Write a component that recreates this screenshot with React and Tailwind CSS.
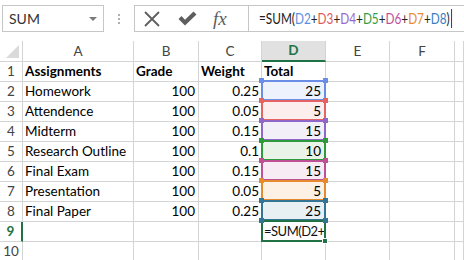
const ranges = {
  2: { border: 'border-[#6a8ee6]', handle: 'bg-[#6a8ee6]', fill: 'bg-[#edf2fc]' },
  3: { border: 'border-[#e46464]', handle: 'bg-[#e46464]', fill: 'bg-[#fdeeee]' },
  4: { border: 'border-[#9066c8]', handle: 'bg-[#9066c8]', fill: 'bg-[#f2eff9]' },
  5: { border: 'border-[#2f9a3c]', handle: 'bg-[#2f9a3c]', fill: 'bg-[#e9f3e8]' },
  6: { border: 'border-[#be5096]', handle: 'bg-[#be5096]', fill: 'bg-[#f8ecf4]' },
  7: { border: 'border-[#e68a2e]', handle: 'bg-[#e68a2e]', fill: 'bg-[#fdf1e6]' },
  8: { border: 'border-[#347596]', handle: 'bg-[#347596]', fill: 'bg-[#e8f0f4]' },
};

const rows = [
  { n: 1, a: 'Assignments', b: 'Grade', c: 'Weight', d: 'Total', head: true },
  { n: 2, a: 'Homework', b: '100', c: '0.25', d: '25' },
  { n: 3, a: 'Attendence', b: '100', c: '0.05', d: '5' },
  { n: 4, a: 'Midterm', b: '100', c: '0.15', d: '15' },
  { n: 5, a: 'Research Outline', b: '100', c: '0.1', d: '10' },
  { n: 6, a: 'Final Exam', b: '100', c: '0.15', d: '15' },
  { n: 7, a: 'Presentation', b: '100', c: '0.05', d: '5' },
  { n: 8, a: 'Final Paper', b: '100', c: '0.25', d: '25' },
  { n: 9 },
  { n: 10 },
];

const formula = [
  ['=SUM(', 'text-[#222]'],
  ['D2', 'text-[#5b8fe0]'],
  ['+', 'text-[#222]'],
  ['D3', 'text-[#e05a5a]'],
  ['+', 'text-[#222]'],
  ['D4', 'text-[#9966cc]'],
  ['+', 'text-[#222]'],
  ['D5', 'text-[#35a046]'],
  ['+', 'text-[#222]'],
  ['D6', 'text-[#c24d9c]'],
  ['+', 'text-[#222]'],
  ['D7', 'text-[#e6892f]'],
  ['+', 'text-[#222]'],
  ['D8', 'text-[#3a7fc0]'],
  [')', 'text-[#222]'],
];

const cell = 'h-full border-r border-b border-[#d4d4d4] flex items-center overflow-hidden whitespace-nowrap shrink-0';

const RangeBox = ({ r }) => (
  <>
    <div className={`absolute -top-[2px] -left-[1px] -right-[1px] bottom-0 border-2 ${r.border} z-10`} />
    <div className={`absolute -top-[4px] -left-[3px] w-[5px] h-[5px] ${r.handle} z-20`} />
    <div className={`absolute -top-[4px] -right-[3px] w-[5px] h-[5px] ${r.handle} z-20`} />
    <div className={`absolute -bottom-[2px] -left-[3px] w-[5px] h-[5px] ${r.handle} z-20`} />
    <div className={`absolute -bottom-[2px] -right-[3px] w-[5px] h-[5px] ${r.handle} z-20`} />
  </>
);

export default function App() {
  return (
    <div className="w-[464px] h-[260px] overflow-hidden bg-white font-['Lato',sans-serif] text-[13.5px] text-black">
      {/* formula bar */}
      <div className="h-[41px] flex items-start pt-[5px]">
        <div className="shrink-0 ml-[2px] w-[102px] h-[27px] border border-[#c6c6c6] flex items-center justify-between pl-[6px] pr-[6px]">
          <span className="text-[14px] text-[#333]">SUM</span>
          <span className="w-0 h-0 border-l-[4px] border-r-[4px] border-t-[4px] border-l-transparent border-r-transparent border-t-[#7a7a7a]" />
        </div>
        <div className="shrink-0 w-[30px] h-[27px] flex flex-col items-center justify-center gap-[2px]">
          <span className="w-[2px] h-[2px] bg-[#b0b0b0]" />
          <span className="w-[2px] h-[2px] bg-[#b0b0b0]" />
          <span className="w-[2px] h-[2px] bg-[#b0b0b0]" />
        </div>
        <div className="flex-1 min-w-0 h-[27px] border-y border-l border-[#c6c6c6] flex">
          <div className="shrink-0 w-[113px] flex items-center pl-[9px] gap-[18px]">
            <svg width="16" height="16" viewBox="0 0 16 16">
              <path d="M1 1 L15 15 M15 1 L1 15" stroke="#5e5e5e" strokeWidth="1.8" fill="none" />
            </svg>
            <svg width="19" height="15" viewBox="0 0 19 15">
              <path d="M0.5 8 L3.5 5 L7 8.8 L15.5 0.5 L18.5 3.5 L7 14.5 Z" fill="#5e5e5e" />
            </svg>
            <span className="font-['Liberation_Serif',serif] italic text-[19px] text-[#5e5e5e] leading-none -ml-[2px]">fx</span>
          </div>
          <div className="flex-1 min-w-0 overflow-hidden border-l border-[#c6c6c6] flex items-center pl-[10px] whitespace-nowrap">
            <div className="flex items-center text-[15.5px] origin-left scale-x-[0.76] whitespace-nowrap">
              {formula.map(([t, c], i) => (
                <span key={i} className={c}>{t}</span>
              ))}
              <span className="ml-[2px] w-[1px] h-[19px] bg-black" />
            </div>
          </div>
        </div>
      </div>

      {/* column headers */}
      <div className="flex h-[21px] text-[#444]">
        <div className="shrink-0 w-[23px] h-full border-r border-b border-[#d4d4d4] relative overflow-hidden">
          <div className="absolute right-[3px] bottom-[3px] w-0 h-0 border-l-[13px] border-t-[13px] border-l-transparent border-t-transparent border-r-0 border-b-[13px] border-b-[#dadada]" />
        </div>
        <div className={`${cell} w-[111px] justify-center`}>A</div>
        <div className={`${cell} w-[65px] justify-center`}>B</div>
        <div className={`${cell} w-[63px] justify-center`}>C</div>
        <div className="shrink-0 h-full w-[64px] border-r border-[#d4d4d4] border-b-2 border-b-[#217346] bg-[#e1e1e1] flex items-center justify-center font-bold text-[#217346]">D</div>
        <div className={`${cell} w-[64px] justify-center`}>E</div>
        <div className={`${cell} w-[65px] justify-center`}>F</div>
        <div className="h-full border-r border-b border-[#d4d4d4] flex-1" />
      </div>

      {/* rows */}
      {rows.map((row) => {
        const r = ranges[row.n];
        const active = row.n === 9;
        return (
          <div key={row.n} className="flex h-[20px]">
            <div
              className={
                active
                  ? 'shrink-0 w-[23px] h-full border-r-2 border-r-[#217346] border-b border-[#d4d4d4] flex items-center justify-center font-bold text-[#217346]'
                  : 'shrink-0 w-[23px] h-full border-r border-b border-[#d4d4d4] flex items-center justify-center text-[#444]'
              }
            >
              {row.n}
            </div>
            <div className={`${cell} w-[111px] pl-[2px] ${row.head ? 'font-bold' : ''}`}>{row.a}</div>
            <div className={`${cell} w-[65px] ${row.head ? 'pl-[2px] font-bold' : 'justify-end pr-[3px]'}`}>{row.b}</div>
            <div className={`${cell} w-[63px] ${row.head ? 'pl-[2px] font-bold' : 'justify-end pr-[2px]'}`}>{row.c}</div>
            <div
              className={`relative shrink-0 w-[64px] h-full border-r border-b border-[#d4d4d4] flex items-center whitespace-nowrap ${
                r ? `${r.fill} justify-end pr-[4px]` : ''
              } ${row.head ? 'pl-[2px] font-bold' : ''}`}
            >
              {row.d}
              {r && <RangeBox r={r} />}
              {active && (
                <>
                  <div className="absolute inset-0 overflow-hidden pl-[2px] flex items-center text-[13px] tracking-[-0.5px] text-[#111] whitespace-nowrap">
                    =SUM(D2+
                  </div>
                  <div className="absolute -top-[2px] -left-[1px] -right-[1px] -bottom-[1px] border-2 border-[#217346] z-10" />
                  <div className="absolute -bottom-[3px] -right-[3px] w-[6px] h-[6px] bg-[#217346] border border-white z-20" />
                </>
              )}
            </div>
            <div className={`${cell} w-[64px]`} />
            <div className={`${cell} w-[65px]`} />
            <div className="h-full border-r border-b border-[#d4d4d4] flex-1" />
          </div>
        );
      })}
    </div>
  );
}
